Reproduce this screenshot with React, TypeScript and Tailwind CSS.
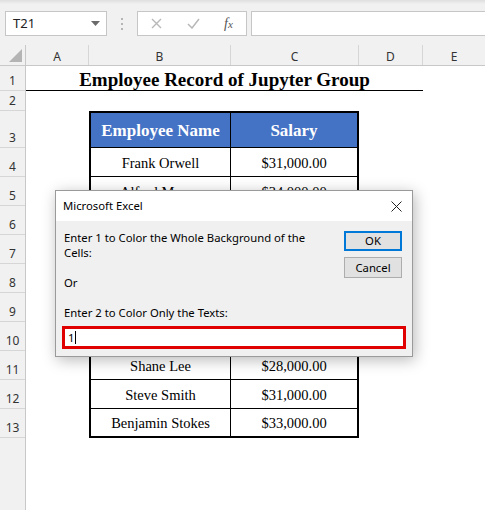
import React from "react";

const rowHeaders: { label: string; h: string }[] = [
  { label: "1", h: "h-[25px]" },
  { label: "2", h: "h-[20px]" },
  { label: "3", h: "h-[37px]" },
  { label: "4", h: "h-[29px]" },
  { label: "5", h: "h-[29px]" },
  { label: "6", h: "h-[29px]" },
  { label: "7", h: "h-[29px]" },
  { label: "8", h: "h-[29px]" },
  { label: "9", h: "h-[29px]" },
  { label: "10", h: "h-[29px]" },
  { label: "11", h: "h-[29px]" },
  { label: "12", h: "h-[29px]" },
  { label: "13", h: "h-[29px]" },
];

const cols: { label: string; w: string }[] = [
  { label: "A", w: "w-[63px]" },
  { label: "B", w: "w-[142px]" },
  { label: "C", w: "w-[128px]" },
  { label: "D", w: "w-[64px]" },
  { label: "E", w: "flex-1" },
];

// Rows 6-10 are hidden behind the dialog in the reference.
const data: [string, string][] = [
  ["Frank Orwell", "$31,000.00"],
  ["Alfred Moyes", "$34,000.00"],
  ["", ""],
  ["", ""],
  ["", ""],
  ["", ""],
  ["", ""],
  ["Shane Lee", "$28,000.00"],
  ["Steve Smith", "$31,000.00"],
  ["Benjamin Stokes", "$33,000.00"],
];

const ui = "font-['Noto_Sans','Liberation_Sans',sans-serif]";
const serif = "font-['Liberation_Serif','Times_New_Roman',serif]";

export default function App() {
  return (
    <div className={`relative w-[485px] h-[510px] overflow-hidden bg-white ${ui}`}>
      {/* Formula bar area */}
      <div className="h-[45px] bg-gradient-to-b from-[#dedede] via-[#f1f1f1] to-[#f1f1f1] bg-[length:100%_8px] bg-no-repeat bg-[#f1f1f1] flex items-start pt-[11px]">
        <div className="ml-[5px] w-[102px] h-[25px] bg-white border border-[#c6c6c6] flex items-center justify-between pl-[7px] pr-[6px]">
          <span className="text-[13px] text-[#222] leading-none">T21</span>
          <svg width="9" height="5" viewBox="0 0 9 5">
            <path d="M0 0 L9 0 L4.5 5 Z" fill="#6b6b6b" />
          </svg>
        </div>
        <div className="w-[30px] h-[25px] flex flex-col items-center justify-center gap-[3px]">
          <span className="w-[2px] h-[2px] bg-[#b5b5b5]" />
          <span className="w-[2px] h-[2px] bg-[#b5b5b5]" />
          <span className="w-[2px] h-[2px] bg-[#b5b5b5]" />
        </div>
        <div className="w-[110px] h-[25px] bg-white border border-[#c6c6c6] flex items-center">
          <div className="w-[37px] flex justify-center">
            <svg width="11" height="11" viewBox="0 0 11 11">
              <path d="M1 1 L10 10 M10 1 L1 10" stroke="#b8b8b8" strokeWidth="1.4" />
            </svg>
          </div>
          <div className="w-[36px] flex justify-center">
            <svg width="13" height="11" viewBox="0 0 13 11">
              <path d="M1 6 L5 10 L12 1" stroke="#b8b8b8" strokeWidth="1.5" fill="none" />
            </svg>
          </div>
          <div className="flex-1 flex justify-center">
            <span className={`${serif} italic text-[14px] text-[#555] leading-none`}>
              f<span className="text-[11px]">x</span>
            </span>
          </div>
        </div>
        <div className="ml-[4px] flex-1 h-[25px] bg-white border-y border-l border-[#c6c6c6]" />
      </div>

      {/* Sheet */}
      <div className="flex h-[465px]">
        {/* Row headers */}
        <div className="w-[26px] flex flex-col bg-[#f1f1f1] border-r border-[#c8c8c8]">
          <div className="h-[21px] border-b border-[#c8c8c8] flex items-end justify-end pr-[3px] pb-[3px]">
            <svg width="13" height="13" viewBox="0 0 13 13">
              <path d="M13 0 L13 13 L0 13 Z" fill="#b4b4b4" />
            </svg>
          </div>
          {rowHeaders.map((r) => (
            <div
              key={r.label}
              className={`${r.h} border-b border-[#d6d6d6] flex items-end justify-center pb-[1px] text-[12px] leading-[16px] text-[#333]`}
            >
              {r.label}
            </div>
          ))}
          <div className="flex-1" />
        </div>

        {/* Cells */}
        <div className="flex-1 flex flex-col">
          <div className="h-[21px] flex bg-[#f1f1f1] border-b border-[#c8c8c8]">
            {cols.map((c) => (
              <div
                key={c.label}
                className={`${c.w} h-full flex items-center justify-center pt-[4px] text-[12px] text-[#333] border-r border-[#d6d6d6] last:border-r-0`}
              >
                {c.label}
              </div>
            ))}
          </div>

          {/* Row 1: title */}
          <div className="h-[25px] flex">
            <div
              className={`w-[397px] border-b border-black flex items-center justify-center pt-[2px] ${serif} font-bold text-[19px] leading-none text-black`}
            >
              Employee Record of Jupyter Group
            </div>
          </div>

          {/* Row 2 */}
          <div className="h-[20px]" />

          {/* Table */}
          <div className={`ml-[63px] w-[270px] border-2 border-black flex flex-col ${serif}`}>
            <div className="h-[35px] flex bg-[#4472c4] border-b border-black text-white font-bold text-[17px]">
              <div className="w-[140px] border-r border-black flex items-center justify-center pt-[2px]">
                Employee Name
              </div>
              <div className="flex-1 flex items-center justify-center pt-[2px]">Salary</div>
            </div>
            {data.map(([name, sal], i) => (
              <div
                key={i}
                className={`${i === data.length - 1 ? "h-[27px]" : "h-[29px] border-b"} flex border-black text-[14.5px] text-black`}
              >
                <div className="w-[140px] border-r border-black flex items-center justify-center pt-[3px]">
                  {name}
                </div>
                <div className="flex-1 flex items-center justify-center pt-[3px]">{sal}</div>
              </div>
            ))}
          </div>
        </div>
      </div>

      {/* Dialog */}
      <div className="absolute left-[55px] top-[190px] w-[358px] h-[167px] border border-[#9a9a9a] bg-[#f0f0f0] shadow-[2px_3px_14px_rgba(0,0,0,0.28)] flex flex-col text-[11.3px] text-black">
        <div className="h-[30px] bg-white flex items-center justify-between pl-[7px] pr-[10px]">
          <span className="leading-none">Microsoft Excel</span>
          <svg width="11" height="11" viewBox="0 0 11 11">
            <path d="M0.5 0.5 L10.5 10.5 M10.5 0.5 L0.5 10.5" stroke="#222" strokeWidth="1" />
          </svg>
        </div>
        <div className="flex-1 flex flex-col pt-[9px]">
          <div className="flex items-start">
            <div className="flex-1 pl-[8px] leading-[15px] whitespace-nowrap">
              <div>Enter 1 to Color the Whole Background of the</div>
              <div>Cells:</div>
              <div>&nbsp;</div>
              <div>Or</div>
              <div>&nbsp;</div>
              <div>Enter 2 to Color Only the Texts:</div>
            </div>
            <div className="flex flex-col gap-[6px] pr-[10px] pt-[1px]">
              <div className="w-[58px] h-[20px] bg-[#e1e1e1] border-2 border-[#0078d7] flex items-center justify-center leading-none">
                OK
              </div>
              <div className="w-[58px] h-[21px] bg-[#e1e1e1] border border-[#adadad] flex items-center justify-center leading-none">
                Cancel
              </div>
            </div>
          </div>
          <div className="mt-[6px] mx-[6px] h-[23px] bg-white border-[3px] border-[#e00000] flex items-center pl-[3px]">
            <span className="leading-none">1</span>
            <span className="w-[1px] h-[13px] bg-black ml-[1px]" />
          </div>
        </div>
      </div>
    </div>
  );
}
